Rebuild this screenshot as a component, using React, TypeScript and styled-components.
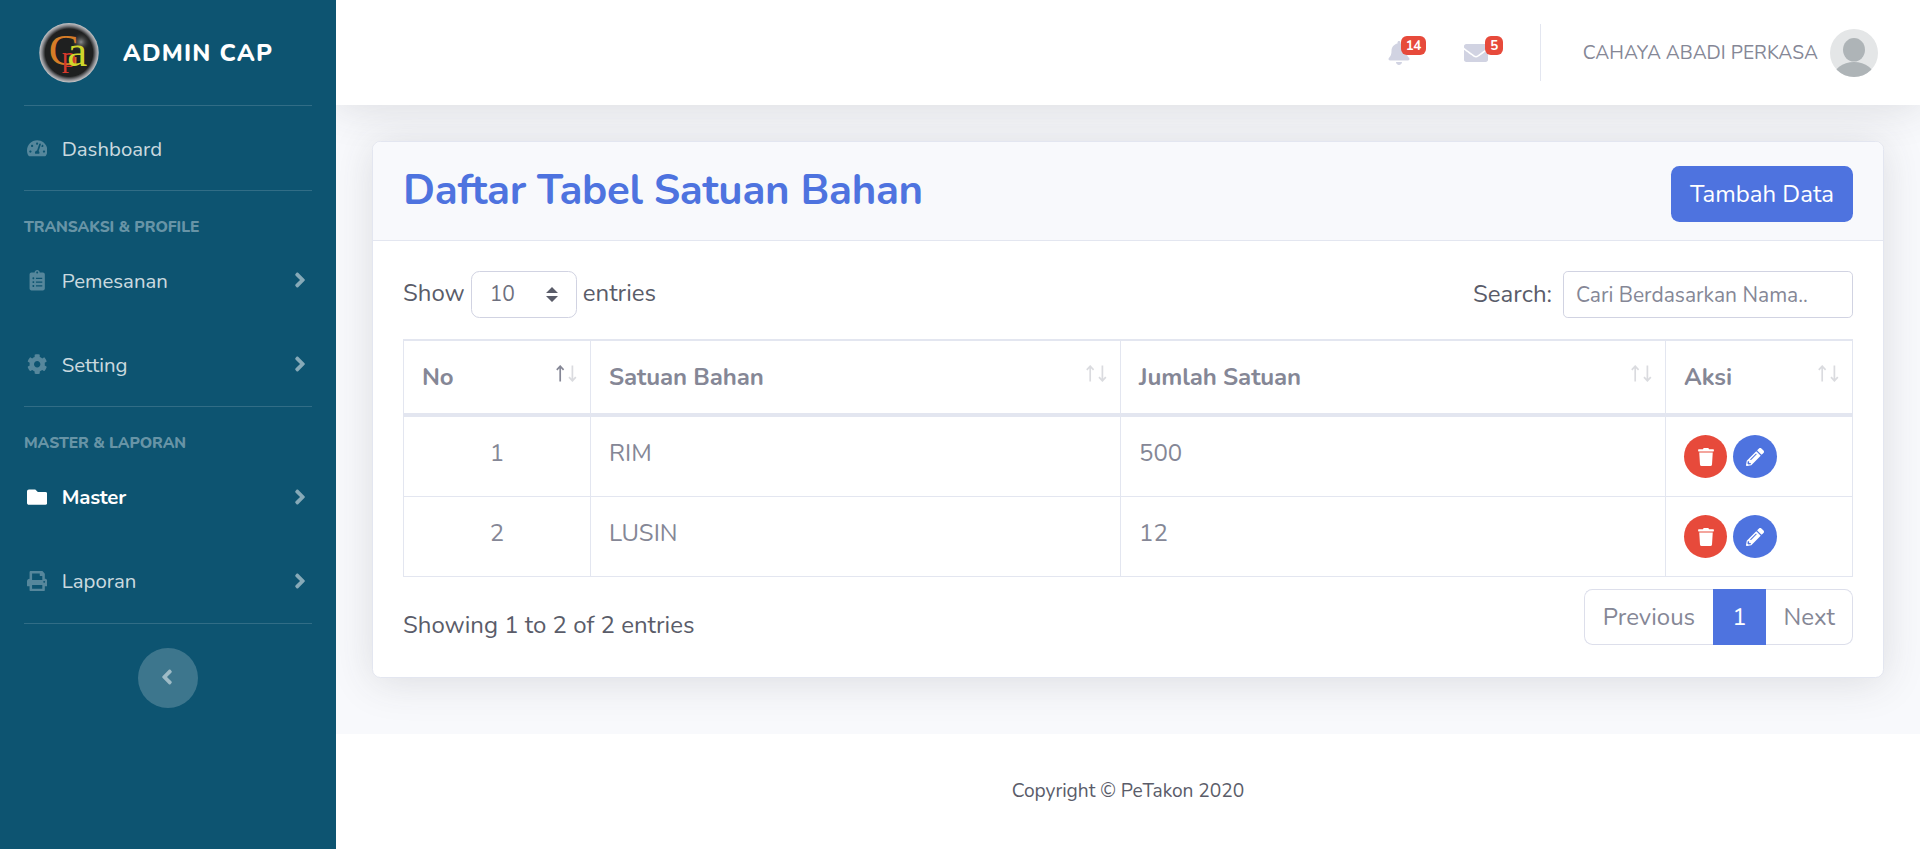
import React from "react";
import styled, { createGlobalStyle, css } from "styled-components";
import {
  FaAngleLeft,
  FaAngleRight,
  FaBell,
  FaClipboardList,
  FaCog,
  FaEnvelope,
  FaFolder,
  FaPencilAlt,
  FaTachometerAlt,
  FaTrash,
} from "react-icons/fa";

const GlobalStyle = createGlobalStyle`
  *, *::before, *::after { box-sizing: border-box; }
  html { font-size: 24px; }
  body {
    margin: 0;
    font-family: Nunito, Lato, "Open Sans", sans-serif;
    font-size: 1rem;
    line-height: 1.5;
    color: #858796;
    background: #fff;
    overflow: hidden;
  }
  button, input { font-family: inherit; }
`;

const Page = styled.div`
  display: flex;
  height: 849px;
  overflow: hidden;
`;

/* ---------- Sidebar ---------- */

const Sidebar = styled.nav`
  flex: 0 0 14rem;
  display: flex;
  flex-direction: column;
  background: #0d5471;
`;

const Brand = styled.div`
  display: flex;
  align-items: center;
  justify-content: center;
  height: 4.375rem;
  color: #fff;
  font-weight: 800;
  letter-spacing: 0.05rem;
`;

const BrandText = styled.span`
  margin: 0 1rem;
  white-space: nowrap;
`;

const Divider = styled.hr<{ $gap?: boolean }>`
  flex: none;
  width: 12rem;
  height: 1px;
  margin: 0 1rem ${(p) => (p.$gap ? "1rem" : "0")};
  border: 0;
  background: rgba(255, 255, 255, 0.15);
`;

const Heading = styled.div`
  height: 23.4px;
  padding: 0.5px 1rem 0;
  font-size: 0.65rem;
  font-weight: 800;
  letter-spacing: -0.05px;
  color: rgba(255, 255, 255, 0.4);
  text-transform: uppercase;
`;

const NavLink = styled.a<{ $active?: boolean }>`
  display: flex;
  align-items: center;
  height: 84px;
  padding: 0 1rem;
  color: ${(p) => (p.$active ? "#fff" : "rgba(255, 255, 255, 0.8)")};
  font-weight: ${(p) => (p.$active ? 700 : 400)};
  letter-spacing: ${(p) => (p.$active ? "-0.2px" : "normal")};
`;

const NavIcon = styled.span<{ $active?: boolean }>`
  display: flex;
  justify-content: center;
  width: 25.5px;
  margin-right: 12.2px;
  font-size: 0.85rem;
  color: ${(p) => (p.$active ? "#fff" : "rgba(255, 255, 255, 0.3)")};
`;

const NavLabel = styled.span`
  flex: 1;
  font-size: 0.85rem;
  padding-top: 2px;
`;

const Caret = styled.span`
  display: flex;
  justify-content: center;
  width: 1rem;
  color: rgba(255, 255, 255, 0.5);
`;

const Toggle = styled.button`
  display: flex;
  align-items: center;
  justify-content: center;
  align-self: center;
  width: 2.5rem;
  height: 2.5rem;
  padding: 0 2.4px 2px 0;
  border: 0;
  border-radius: 50%;
  font-size: 1rem;
  color: rgba(255, 255, 255, 0.5);
  background: rgba(255, 255, 255, 0.2);
`;

/* ---------- Top bar ---------- */

const Main = styled.div`
  flex: 1;
  min-width: 0;
  display: flex;
  flex-direction: column;
  overflow: hidden;
  background: #f8f9fc;
`;

const Topbar = styled.header`
  display: flex;
  align-items: center;
  justify-content: flex-end;
  height: 4.375rem;
  padding-right: 42px;
  background: #fff;
  box-shadow: 0 0.15rem 1.75rem 0 rgba(58, 59, 69, 0.15);
`;

const Alert = styled.a`
  position: relative;
  display: flex;
  align-items: center;
  justify-content: center;
  width: 66px;
  height: 4.375rem;
  margin: 0 5px 0 6px;
  font-size: 1rem;
  color: #d1d3e2;
`;

const Counter = styled.span`
  position: absolute;
  top: 36px;
  right: 6px;
  height: 19px;
  padding: 0 5px;
  border-radius: 5.9px;
  font-size: 13.4px;
  font-weight: 700;
  line-height: 19px;
  letter-spacing: -0.5px;
  color: #fff;
  background: #e74a3b;
`;

const TopDivider = styled.div`
  height: 57px;
  margin: 0 42px 0 26px;
  border-right: 1px solid #e3e6f0;
`;

const UserName = styled.span`
  margin-right: 12px;
  padding-top: 1px;
  font-size: 0.8rem;
  white-space: nowrap;
`;

/* ---------- Card ---------- */

const Card = styled.section`
  margin: 36px 36px 56px;
  border: 1px solid #e3e6f0;
  border-radius: 0.35rem;
  background: #fff;
  box-shadow: 0 0.15rem 1.75rem 0 rgba(58, 59, 69, 0.15);
`;

const CardHeader = styled.div`
  display: flex;
  align-items: flex-start;
  justify-content: space-between;
  height: 99px;
  padding: 1rem 30px;
  border-bottom: 1px solid #e3e6f0;
  border-radius: 0.3rem 0.3rem 0 0;
  background: #f8f9fc;
`;

const Title = styled.h3`
  margin: 0;
  font-size: 1.75rem;
  font-weight: 700;
  line-height: 1.2;
  letter-spacing: -0.3px;
  font-feature-settings: "liga" 1;
  color: #4e73df;
`;

const AddButton = styled.button`
  height: 56px;
  padding: 0 19px;
  border: 0;
  border-radius: 0.35rem;
  font-size: 1rem;
  line-height: 1.5;
  color: #fff;
  background: #4e73df;
`;

const CardBody = styled.div`
  height: 436px;
  padding: 30px;
`;

const Controls = styled.div`
  display: flex;
  justify-content: space-between;
  height: 68px;
  color: #5a5c69;
`;

const Label = styled.label`
  display: flex;
  align-items: center;
  height: 47px;
`;

const LabelText = styled.span<{ $lift?: number }>`
  padding-bottom: ${(p) => p.$lift ?? 0}px;
`;

const Select = styled.div`
  display: flex;
  align-items: center;
  justify-content: space-between;
  width: 106px;
  height: 47px;
  margin: 0 6px;
  padding: 0 18px;
  border: 1px solid #d1d3e2;
  border-radius: 0.35rem;
  font-size: 0.875rem;
  color: #6e707e;
`;

const SearchInput = styled.input`
  width: 290px;
  height: 47px;
  margin-left: 11px;
  padding: 0 12px;
  border: 1px solid #d1d3e2;
  border-radius: 0.2rem;
  font-size: 0.875rem;
  background: #fff;
  &::placeholder { color: #858796; opacity: 1; }
`;

/* ---------- Table ---------- */

const Table = styled.table`
  width: 100%;
  table-layout: fixed;
  border-collapse: separate;
  border-spacing: 0;
  border-right: 1px solid #e3e6f0;
`;

const Col = styled.col<{ $w: number }>`
  width: ${(p) => p.$w}px;
`;

const cell = css`
  padding: 18px;
  border-left: 1px solid #e3e6f0;
  text-align: left;
  vertical-align: top;
`;

const Th = styled.th`
  ${cell}
  height: 78px;
  border-top: 2px solid #e3e6f0;
  border-bottom: 4px solid #e3e6f0;
  padding-right: 13px;
  font-weight: 700;
  letter-spacing: -0.1px;
`;

const ThInner = styled.div`
  display: flex;
  justify-content: space-between;
`;

const Td = styled.td<{ $center?: boolean }>`
  ${cell}
  height: 80px;
  border-bottom: 1px solid #e3e6f0;
  text-align: ${(p) => (p.$center ? "center" : "left")};
`;

const Actions = styled.div`
  display: flex;
  gap: 6px;
`;

const RoundButton = styled.button<{ $tone: string; $w: number }>`
  display: flex;
  align-items: center;
  justify-content: center;
  width: ${(p) => p.$w}px;
  height: 43px;
  padding: 0;
  border: 0;
  border-radius: 50%;
  font-size: 18px;
  color: #fff;
  background: ${(p) => p.$tone};
`;

/* ---------- Table footer ---------- */

const TableFooter = styled.div`
  display: flex;
  justify-content: space-between;
  padding-top: 12px;
`;

const Info = styled.div`
  padding-top: 18px;
  color: #5a5c69;
`;

const Pagination = styled.div`
  display: flex;
  height: 56px;
`;

const PageLink = styled.a<{ $active?: boolean; $side?: "left" | "right" }>`
  padding: 12px 18px;
  line-height: 1.25;
  border: 1px solid ${(p) => (p.$active ? "#4e73df" : "#dddfeb")};
  color: ${(p) => (p.$active ? "#fff" : "#858796")};
  background: ${(p) => (p.$active ? "#4e73df" : "#fff")};
  ${(p) => p.$side === "left" && "border-right: 0; border-radius: 0.35rem 0 0 0.35rem;"}
  ${(p) => p.$side === "right" && "padding-right: 17px; border-left: 0; border-radius: 0 0.35rem 0.35rem 0;"}
`;

const Footer = styled.footer`
  position: relative;
  flex: 1;
  padding-top: 2rem;
  font-size: 0.8rem;
  line-height: 1;
  letter-spacing: -0.05px;
  text-align: center;
  color: #5a5c69;
  background: #fff;
`;

/* ---------- Drawings ---------- */

const LogoSvg = styled.svg`
  flex: none;
  width: 60px;
  height: 60px;
  font-family: "Liberation Serif", serif;
  font-weight: 400;
  letter-spacing: 0;
`;

const Logo = () => (
  <LogoSvg viewBox="0 0 60 60">
    <defs>
      <radialGradient id="rim">
        <stop offset="0.8" stopColor="#1f2020" />
        <stop offset="0.91" stopColor="#85868a" />
        <stop offset="1" stopColor="#c8c8ca" />
      </radialGradient>
      <radialGradient id="shine">
        <stop offset="0" stopColor="#8b8c8c" />
        <stop offset="1" stopColor="#1f2020" stopOpacity="0" />
      </radialGradient>
    </defs>
    <circle cx="30" cy="29.7" r="29.7" fill="url(#rim)" />
    <circle cx="42" cy="19" r="10" fill="url(#shine)" />
    <text x="9.7" y="42" fontSize="45" fill="#d67d27">C</text>
    <text x="22.8" y="44.2" fontSize="29" fill="#d6392c">p</text>
    <text x="28.3" y="42.5" fontSize="45" fill="#d0d62b">a</text>
  </LogoSvg>
);

const AvatarSvg = styled.svg`
  flex: none;
  width: 48px;
  height: 48px;
`;

const Avatar = () => (
  <AvatarSvg viewBox="0 0 48 48">
    <defs>
      <clipPath id="face">
        <circle cx="24" cy="24" r="24" />
      </clipPath>
    </defs>
    <g clipPath="url(#face)">
      <rect width="48" height="48" fill="#e4e6e7" />
      <ellipse cx="24" cy="20.8" rx="11" ry="11.8" fill="#aeb4b7" />
      <ellipse cx="24" cy="49" rx="21" ry="16" fill="#aeb4b7" />
    </g>
  </AvatarSvg>
);

const SelectArrows = () => (
  <svg width="12" height="15" viewBox="0 0 12 15" fill="#5a5c69">
    <path d="M0 6 6 0 12 6zM0 9 6 15 12 9z" />
  </svg>
);

const SortSvg = styled.svg`
  margin-top: 5.5px;
`;

const SortArrows = ({ active }: { active?: boolean }) => (
  <SortSvg width="21" height="17" viewBox="0 0 21 17" fill="none" stroke="#858796" strokeWidth="1.7">
    <path d="M4.2 16.5V1.5M.8 4.8 4.2 1.2 7.6 4.8" opacity={active ? 1 : 0.3} />
    <path d="M16.4.5V15.5M13 12.2l3.4 3.6 3.4-3.6" opacity="0.3" />
  </SortSvg>
);

const PrintIcon = () => (
  <svg width="1em" height="1em" viewBox="0 0 512 512" fill="currentColor">
    <path d="M448 192V77.25c0-8.49-3.37-16.62-9.37-22.63L393.37 9.37c-6-6-14.14-9.37-22.63-9.37H96C78.33 0 64 14.33 64 32v160c-35.35 0-64 28.65-64 64v112c0 8.84 7.16 16 16 16h48v96c0 17.67 14.33 32 32 32h320c17.67 0 32-14.33 32-32v-96h48c8.84 0 16-7.16 16-16V256c0-35.35-28.65-64-64-64zm-64 256H128v-96h256v96zm0-224H128V64h192v48c0 8.84 7.16 16 16 16h48v96zm48 72c-13.25 0-24-10.75-24-24 0-13.26 10.75-24 24-24s24 10.74 24 24c0 13.25-10.75 24-24 24z" />
  </svg>
);

/* ---------- Page ---------- */

type NavItemProps = { icon: React.ReactNode; label: string; active?: boolean; caret?: boolean };

const NavItem = ({ icon, label, active, caret = true }: NavItemProps) => (
  <NavLink $active={active}>
    <NavIcon $active={active}>{icon}</NavIcon>
    <NavLabel>{label}</NavLabel>
    {caret && (
      <Caret>
        <FaAngleRight />
      </Caret>
    )}
  </NavLink>
);

const columns = ["No", "Satuan Bahan", "Jumlah Satuan", "Aksi"];
const rows = [
  { no: 1, name: "RIM", amount: 500 },
  { no: 2, name: "LUSIN", amount: 12 },
];

export default function App() {
  return (
    <>
      <GlobalStyle />
      <Page>
        <Sidebar>
          <Brand>
            <Logo />
            <BrandText>ADMIN CAP</BrandText>
          </Brand>
          <Divider />
          <NavItem icon={<FaTachometerAlt />} label="Dashboard" caret={false} />
          <Divider $gap />
          <Heading>Transaksi &amp; Profile</Heading>
          <NavItem icon={<FaClipboardList />} label="Pemesanan" />
          <NavItem icon={<FaCog />} label="Setting" />
          <Divider $gap />
          <Heading>Master &amp; Laporan</Heading>
          <NavItem icon={<FaFolder />} label="Master" active />
          <NavItem icon={<PrintIcon />} label="Laporan" />
          <Divider $gap />
          <Toggle>
            <FaAngleLeft />
          </Toggle>
        </Sidebar>
        <Main>
          <Topbar>
            <Alert>
              <FaBell />
              <Counter>14</Counter>
            </Alert>
            <Alert>
              <FaEnvelope />
              <Counter>5</Counter>
            </Alert>
            <TopDivider />
            <UserName>CAHAYA ABADI PERKASA</UserName>
            <Avatar />
          </Topbar>
          <Card>
            <CardHeader>
              <Title>Daftar Tabel Satuan Bahan</Title>
              <AddButton>Tambah Data</AddButton>
            </CardHeader>
            <CardBody>
              <Controls>
                <Label>
                  <LabelText $lift={4}>Show</LabelText>
                  <Select>
                    10
                    <SelectArrows />
                  </Select>
                  <LabelText $lift={4}>entries</LabelText>
                </Label>
                <Label>
                  <LabelText $lift={2}>Search:</LabelText>
                  <SearchInput placeholder="Cari Berdasarkan Nama.." />
                </Label>
              </Controls>
              <Table>
                <colgroup>
                  <Col $w={187} />
                  <Col $w={530} />
                  <Col $w={545} />
                  <Col $w={187} />
                </colgroup>
                <thead>
                  <tr>
                    {columns.map((name, i) => (
                      <Th key={name}>
                        <ThInner>
                          {name}
                          <SortArrows active={i === 0} />
                        </ThInner>
                      </Th>
                    ))}
                  </tr>
                </thead>
                <tbody>
                  {rows.map((row) => (
                    <tr key={row.no}>
                      <Td $center>{row.no}</Td>
                      <Td>{row.name}</Td>
                      <Td>{row.amount}</Td>
                      <Td>
                        <Actions>
                          <RoundButton $tone="#e74a3b" $w={43}>
                            <FaTrash />
                          </RoundButton>
                          <RoundButton $tone="#4e73df" $w={44}>
                            <FaPencilAlt />
                          </RoundButton>
                        </Actions>
                      </Td>
                    </tr>
                  ))}
                </tbody>
              </Table>
              <TableFooter>
                <Info>Showing 1 to 2 of 2 entries</Info>
                <Pagination>
                  <PageLink $side="left">Previous</PageLink>
                  <PageLink $active>1</PageLink>
                  <PageLink $side="right">Next</PageLink>
                </Pagination>
              </TableFooter>
            </CardBody>
          </Card>
          <Footer>Copyright © PeTakon 2020</Footer>
        </Main>
      </Page>
    </>
  );
}
